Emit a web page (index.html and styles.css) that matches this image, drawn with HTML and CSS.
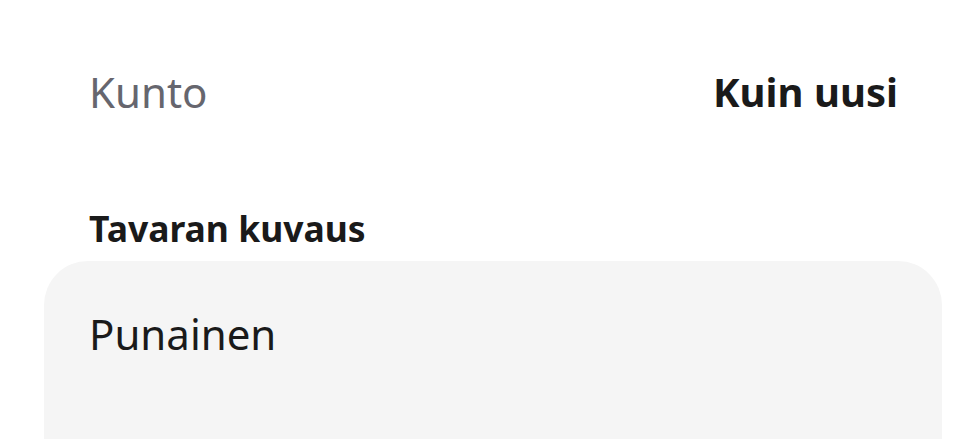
FILE: index.html
```html
<!DOCTYPE html>
<html lang="fi">
<head>
<meta charset="utf-8">
<link rel="stylesheet" href="styles.css">
</head>
<body>
<div class="page">
  <div class="row">
    <span class="label">Kunto</span>
    <span class="value">Kuin uusi</span>
  </div>
  <h2 class="heading">Tavaran kuvaus</h2>
  <div class="box">
    <p class="desc">Punainen</p>
  </div>
</div>
</body>
</html>
```
FILE: styles.css
```css
html, body {
  margin: 0;
  padding: 0;
  background: #ffffff;
  font-family: "Noto Sans", "Open Sans", sans-serif;
}
.page {
  display: flex;
  flex-direction: column;
  width: 960px;
  height: 439px;
  overflow: hidden;
}
.row {
  display: flex;
  justify-content: space-between;
  align-items: center;
  height: 60px;
  margin-top: 61px;
  padding: 0 62px 0 89px;
  flex-shrink: 0;
}
.label {
  font-size: 42px;
  color: #66666e;
}
.value {
  font-size: 40px;
  font-weight: 700;
  color: #1a1a1a;
}
.heading {
  margin: 0;
  margin-top: 83px;
  padding-left: 89px;
  font-size: 35.5px;
  font-weight: 700;
  color: #1a1a1a;
  line-height: 48px;
  flex-shrink: 0;
}
.box {
  margin: 9px 18px 0 44px;
  height: 240px;
  flex-shrink: 0;
  background: #f5f5f5;
  border-radius: 44px;
  padding: 46px 45px;
}
.desc {
  margin: 0;
  font-size: 42px;
  color: #1a1a1a;
  line-height: 54px;
}
```
